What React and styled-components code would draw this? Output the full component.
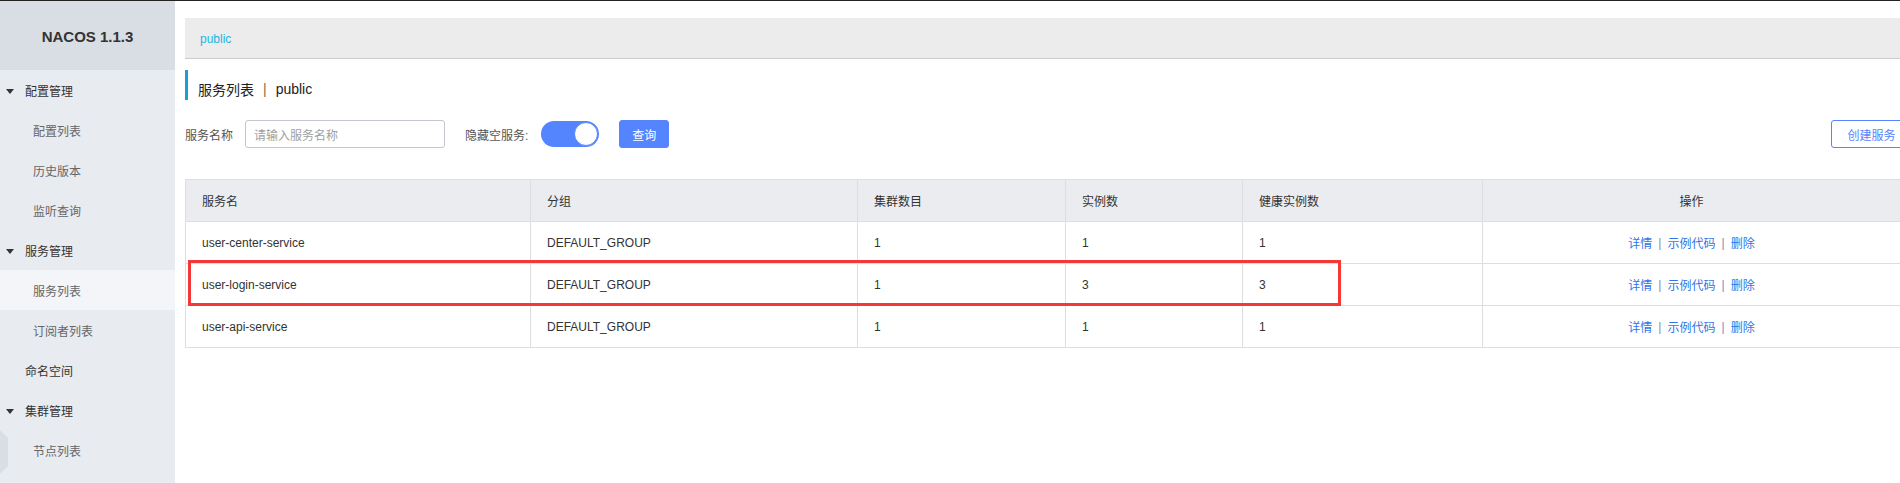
import React from "react";
import styled, { createGlobalStyle } from "styled-components";

const Global = createGlobalStyle`
  html, body { margin: 0; padding: 0; background: #fff; overflow: hidden; }
  body { font-family: "Liberation Sans", Arial, "Noto Sans CJK SC", sans-serif; font-size: 12px; color: #333; }
  * { box-sizing: border-box; }
`;

const Page = styled.div`
  width: 1912px;
  height: 483px;
  border-top: 1px solid #222;
  display: flex;
`;

const Sidebar = styled.aside`
  width: 175px;
  flex: none;
  background: #e8ebf0;
  position: relative;
`;

const Brand = styled.div`
  height: 69px;
  background: #d9dde4;
  display: flex;
  align-items: center;
  justify-content: center;
  font-size: 15px;
  font-weight: bold;
  color: #333;
  padding-top: 1px;
`;

const MenuItem = styled.div`
  height: 40px;
  display: flex;
  align-items: center;
  padding-left: ${(p) => (p.$child ? 33 : 25)}px;
  position: relative;
  color: ${(p) => (p.$child ? "#666" : "#333")};
  background: ${(p) => (p.$active ? "#f3f5f8" : "transparent")};
  font-size: 12px;
`;

const Caret = styled.span`
  position: absolute;
  left: 6px;
  top: 19px;
  width: 0;
  height: 0;
  border-left: 4.5px solid transparent;
  border-right: 4.5px solid transparent;
  border-top: 5px solid #333;
`;

const Handle = styled.div`
  position: absolute;
  left: 0;
  top: 429px;
  width: 8px;
  height: 44px;
  background: #d9dde4;
  clip-path: polygon(0 0, 100% 18%, 100% 82%, 0 100%);
`;

const Main = styled.main`
  flex: 1;
  padding: 17px 0 0 10px;
  display: flex;
  flex-direction: column;
`;

const Breadcrumb = styled.div`
  height: 41px;
  background: #ececec;
  border-bottom: 1px solid #cccccc;
  display: flex;
  align-items: center;
  padding-left: 15px;
  color: #1fb5e2;
  font-size: 12px;
  padding-top: 2px;
`;

const Title = styled.div`
  margin-top: 11px;
  height: 30px;
  border-left: 3px solid #1a9fd2;
  display: flex;
  align-items: center;
  padding: 8px 0 0 10px;
  font-size: 14px;
  color: #222;
`;

const Sep = styled.span`
  margin: 0 9px;
  color: #8a6d3b;
`;

const Toolbar = styled.div`
  margin-top: 20px;
  height: 28px;
  display: flex;
  align-items: center;
`;

const Label = styled.span`
  color: #555;
  font-size: 12px;
  white-space: nowrap;
  margin-right: ${(p) => p.$mr || 0}px;
`;

const Input = styled.div`
  width: 200px;
  height: 28px;
  border: 1px solid #c4c6cf;
  border-radius: 3px;
  display: flex;
  align-items: center;
  padding-left: 8px;
  color: #a0a0a0;
  margin-right: 20px;
`;

const Toggle = styled.div`
  width: 58px;
  height: 26px;
  border-radius: 13px;
  background: #5584ff;
  display: flex;
  align-items: center;
  justify-content: flex-end;
  padding-right: 1px;
  margin-right: 20px;
`;

const Knob = styled.div`
  width: 24px;
  height: 24px;
  border-radius: 50%;
  background: #fff;
  border: 1px solid #5584ff;
`;

const Button = styled.div`
  height: 28px;
  border-radius: 3px;
  display: flex;
  align-items: center;
  justify-content: center;
  white-space: nowrap;
  font-size: 12px;
  background: ${(p) => (p.$ghost ? "#fff" : "#5584ff")};
  color: ${(p) => (p.$ghost ? "#5584ff" : "#fff")};
  border: 1px solid #5584ff;
  width: ${(p) => p.$w}px;
  flex: none;
`;

const Spacer = styled.div`
  flex: 1;
`;

const TableWrap = styled.div`
  margin-top: 31px;
  margin-right: 11px;
  position: relative;
  border-left: 1px solid #dcdee3;
`;

const Row = styled.div`
  display: grid;
  grid-template-columns: 345px 327px 208px 177px 240px 1fr;
  height: ${(p) => (p.$head ? 43 : 42)}px;
  background: ${(p) => (p.$head ? "#ebecf0" : "#fff")};
  border-top: ${(p) => (p.$head ? "1px solid #dcdee3" : "none")};
  border-bottom: 1px solid #dcdee3;
`;

const Cell = styled.div`
  display: flex;
  align-items: center;
  justify-content: ${(p) => (p.$center ? "center" : "flex-start")};
  padding-left: ${(p) => (p.$center ? 0 : 16)}px;
  border-right: 1px solid #dcdee3;
  color: #333;
  font-size: 12px;
  white-space: nowrap;
`;

const Link = styled.span`
  color: #2f74e8;
`;

const Bar = styled.span`
  color: #7d8cc0;
  margin: 0 6px;
`;

const Highlight = styled.div`
  position: absolute;
  left: 2px;
  top: 81px;
  width: 1153px;
  height: 46px;
  border: 3px solid #f43838;
  pointer-events: none;
`;

const menu = [
  { t: "配置管理" },
  { t: "配置列表", c: true },
  { t: "历史版本", c: true },
  { t: "监听查询", c: true },
  { t: "服务管理" },
  { t: "服务列表", c: true, a: true },
  { t: "订阅者列表", c: true },
  { t: "命名空间", plain: true },
  { t: "集群管理" },
  { t: "节点列表", c: true },
];

const rows = [
  ["user-center-service", "DEFAULT_GROUP", "1", "1", "1"],
  ["user-login-service", "DEFAULT_GROUP", "1", "3", "3"],
  ["user-api-service", "DEFAULT_GROUP", "1", "1", "1"],
];

export default function App() {
  return (
    <>
      <Global />
      <Page>
        <Sidebar>
          <Brand>NACOS 1.1.3</Brand>
          {menu.map((m) => (
            <MenuItem key={m.t} $child={m.c} $active={m.a}>
              {!m.c && !m.plain && <Caret />}
              {m.t}
            </MenuItem>
          ))}
          <Handle />
        </Sidebar>
        <Main>
          <Breadcrumb>public</Breadcrumb>
          <Title>
            服务列表<Sep>|</Sep>public
          </Title>
          <Toolbar>
            <Label $mr={12}>服务名称</Label>
            <Input>请输入服务名称</Input>
            <Label $mr={13}>隐藏空服务:</Label>
            <Toggle>
              <Knob />
            </Toggle>
            <Button $w={50}>查询</Button>
            <Spacer />
            <Button $ghost $w={81}>创建服务</Button>
          </Toolbar>
          <TableWrap>
            <Row $head>
              <Cell>服务名</Cell>
              <Cell>分组</Cell>
              <Cell>集群数目</Cell>
              <Cell>实例数</Cell>
              <Cell>健康实例数</Cell>
              <Cell $center>操作</Cell>
            </Row>
            {rows.map((r) => (
              <Row key={r[0]}>
                {r.map((v, i) => (
                  <Cell key={i}>{v}</Cell>
                ))}
                <Cell $center>
                  <Link>详情</Link>
                  <Bar>|</Bar>
                  <Link>示例代码</Link>
                  <Bar>|</Bar>
                  <Link>删除</Link>
                </Cell>
              </Row>
            ))}
            <Highlight />
          </TableWrap>
        </Main>
      </Page>
    </>
  );
}
